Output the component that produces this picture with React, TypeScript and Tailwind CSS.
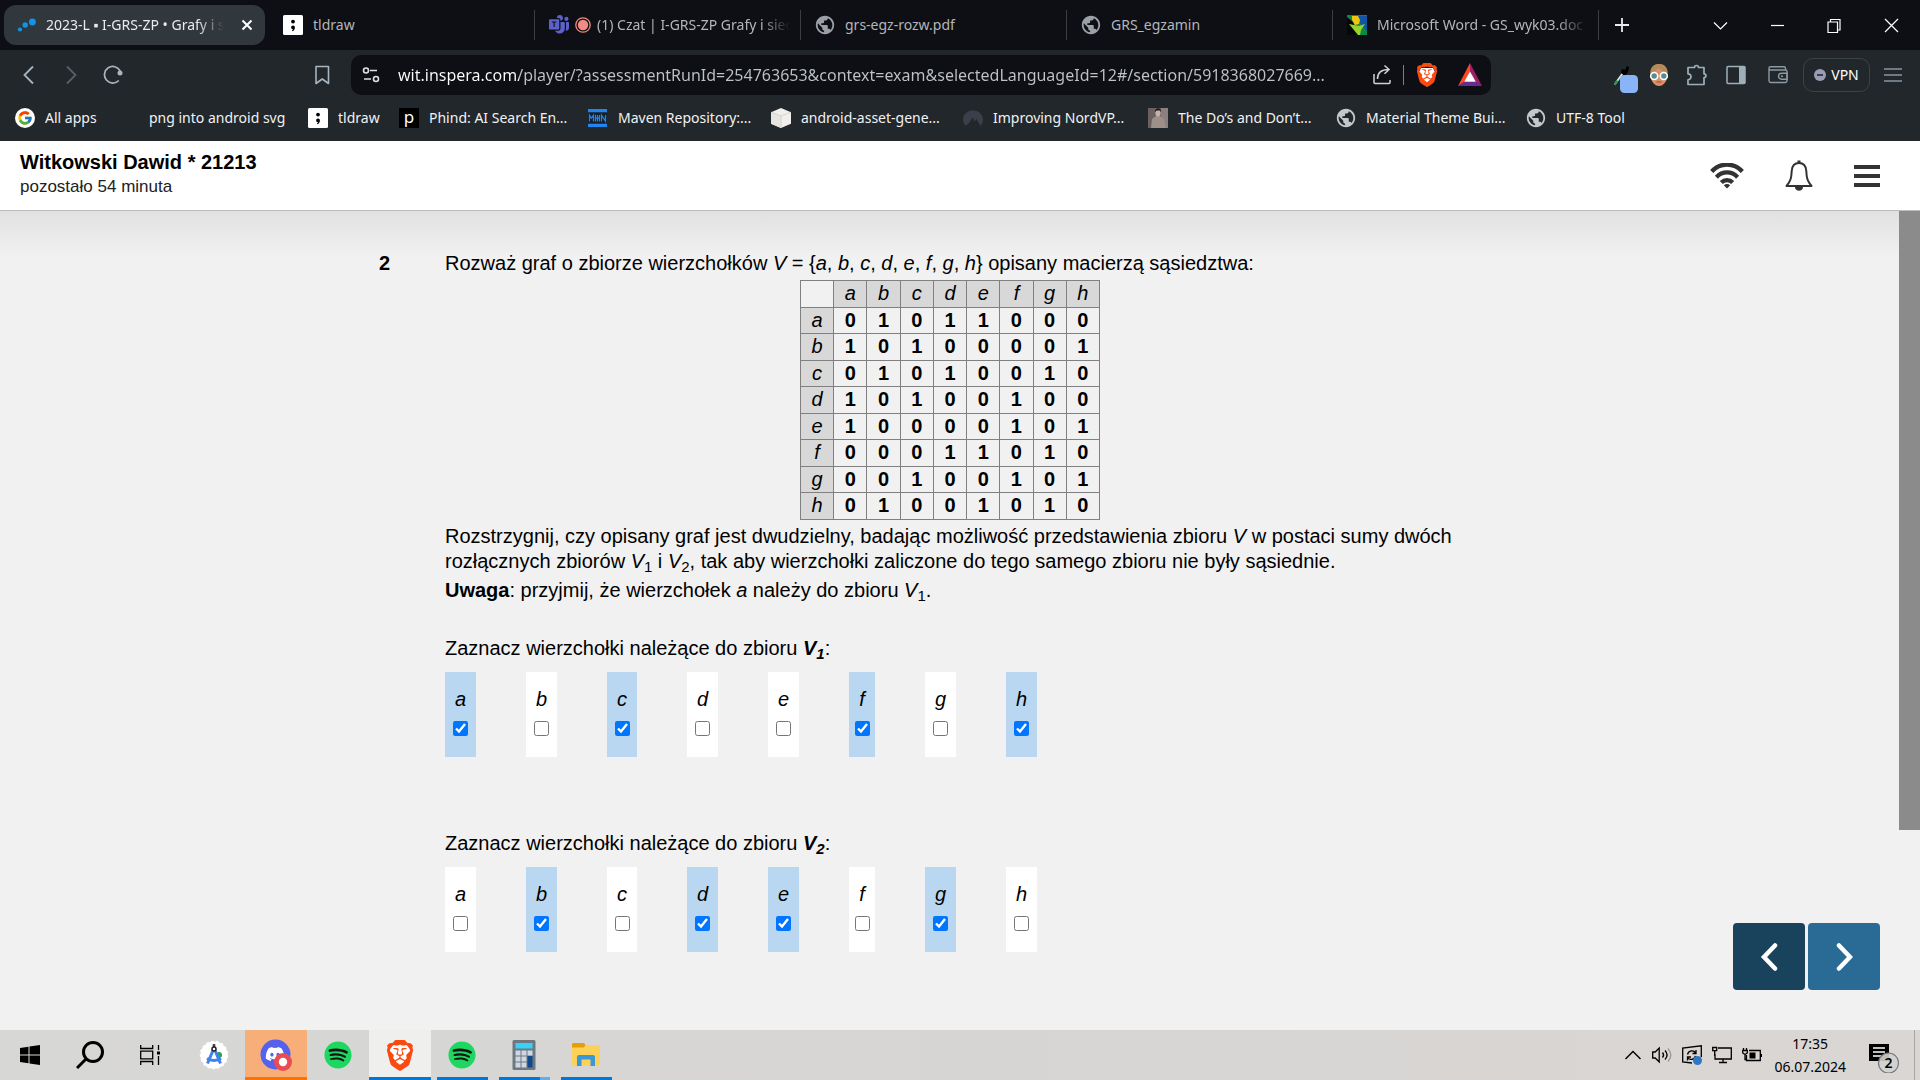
import React, { useState } from "react";
import { FcGoogle } from "react-icons/fc";
import { FaDiscord, FaSpotify } from "react-icons/fa";
import { SiBrave } from "react-icons/si";
import { MdPublic } from "react-icons/md";
import { BsMicrosoftTeams } from "react-icons/bs";

/* ---------- small drawings ---------- */

const Globe = ({ className = "" }: { className?: string }) => (
  <MdPublic className={`size-[22px] -mx-px shrink-0 ${className}`} />
);

const InsperaIcon = () => (
  <svg viewBox="0 0 20 20" className="size-5 shrink-0" fill="#0f94ea">
    <circle cx="3" cy="14.5" r="2.1" />
    <circle cx="8.2" cy="10" r="2.7" />
    <circle cx="15.4" cy="7" r="3.4" />
  </svg>
);

const TldrawIcon = () => (
  <svg viewBox="0 0 20 20" className="size-5 shrink-0">
    <rect width="20" height="20" rx="1.5" fill="#fff" />
    <circle cx="10" cy="6.6" r="1.9" fill="#000" />
    <path d="M8.1 12.2a1.9 1.9 0 0 1 3.8.2c0 1.8-.9 3.2-2.4 3.9l-.6-.7c.6-.4 1-.9 1-1.4a1.9 1.9 0 0 1-1.8-2z" fill="#000" />
  </svg>
);

const WordDocIcon = () => (
  <svg viewBox="0 0 20 20" className="size-5 shrink-0">
    <rect width="20" height="20" fill="#0c8a45" />
    <path d="M11 1h9v15l-7-8z" fill="#1255a4" />
    <path d="M0 2l6 5 6 13H0z" fill="#050805" />
    <path d="M5 1h6l2 4-1 4-4 1-3-5z" fill="#f1c40f" />
    <path d="M2 9l5 1 5 1 6-2-4 6-1 5h-2z" fill="#9ad32a" />
  </svg>
);

const RecordIcon = () => (
  <svg viewBox="0 0 16 16" className="size-4 shrink-0">
    <circle cx="8" cy="8" r="7.2" fill="none" stroke="#f28b82" strokeWidth="1.3" />
    <circle cx="8" cy="8" r="5.2" fill="#f28b82" />
  </svg>
);

const PhindIcon = () => (
  <span className="flex size-5 shrink-0 items-center justify-center bg-black pb-1 text-[17px] leading-none text-white">p</span>
);

const MavenIcon = () => (
  <svg viewBox="0 0 20 20" className="size-5 shrink-0">
    <rect y="1" width="19" height="3.500" fill="#1f86f0" />
    <rect y="15.500" width="19" height="3.500" fill="#1f86f0" />
    <rect y="4.500" width="19" height="11" fill="#14212c" />
    <path d="M1.500 13.500V7.200l2 3 2-3v6.300M7.500 7v6.500M9.500 7v6.500M11.500 7v6.500M7.500 10.200h4M13.500 13.500V7.200l4 6V7" fill="none" stroke="#1f86f0" strokeWidth="1.200" />
  </svg>
);

const CubeIcon = () => (
  <svg viewBox="0 0 20 20" className="size-5 shrink-0">
    <path d="M10 0l10 4.200v11.600L10 20 0 15.800V4.200z" fill="#f0efec" />
    <path d="M0 4.200l10 3.800v12L0 15.800z" fill="#e6e5e1" />
    <path d="M0 4.200L10 8l10-3.800M10 8v12" fill="none" stroke="#cfcdc8" strokeWidth="0.800" />
  </svg>
);

const NordIcon = () => (
  <svg viewBox="0 0 20 20" className="size-5 shrink-0">
    <path d="M2.500 18A10 9.500 0 1 1 17.500 18l-4-7-2 2.500L10 9.500 5.500 15.500z" fill="#3a3f4a" />
  </svg>
);

const PortraitIcon = () => (
  <svg viewBox="0 0 20 20" className="size-5 shrink-0">
    <rect width="20" height="20" fill="#6b5f60" />
    <rect x="13" width="7" height="20" fill="#8b7f80" />
    <path d="M3 20l1-9 4-3h4l4 3 2 9z" fill="#9c9088" />
    <ellipse cx="10" cy="5" rx="2.600" ry="3.400" fill="#c7b0a5" />
    <path d="M7 4c0-5 6-5 6.200 0l-1.500-1.500h-3z" fill="#1d1819" />
  </svg>
);

/* The lion is the cut-out part of the glyph, so a white patch sits behind it. */
const BraveLogo = ({ size }: { size: number }) => (
  <svg viewBox="2 0 20 24" height={size} width={Math.round((size * 20) / 24)}>
    <path d="M6 5h12l2 4-2 8-6 5-6-5-2-8z" fill="#fff" />
    <SiBrave size={24} color="#fb4a10" />
  </svg>
);

const BatIcon = () => (
  <svg viewBox="0 0 24 24" className="size-6 shrink-0">
    <path d="M12 0L0 23l6.500-4L12 9z" fill="#ff4724" />
    <path d="M12 0l12 23-6.500-4L12 9z" fill="#9e1f63" />
    <path d="M0 23h24l-6.500-4.500h-11z" fill="#662d91" />
    <path d="M12 8.500l5.800 10.200H6.200z" fill="#fff" />
  </svg>
);

const PickerIcon = () => (
  <svg viewBox="0 0 26 28" className="h-7 w-[26px] shrink-0">
    <path d="M2 19l8-11" stroke="#d8e6dc" strokeWidth="2" />
    <path d="M1.500 20l3-4.500" stroke="#1f9d4d" strokeWidth="2" />
    <path d="M9 4l3 1 2-4 2 1-1 5-3 4-4-3z" fill="#000" />
    <rect x="7" y="10" width="18" height="18" rx="4.500" fill="#8ab4f8" />
  </svg>
);

const FaceIcon = () => (
  <svg viewBox="0 0 20 22" className="h-[22px] w-5 shrink-0">
    <path d="M1.500 11C1 3.500 5 0 10 0s9 3.500 8.500 11c0 6-4 11-8.500 11S1.500 17 1.500 11z" fill="#d98f68" />
    <path d="M1.300 9C1.500 3 5 0 10 0s8.500 3 8.700 9C15 8 12 6 9 4 7 7 4 8 1.300 9z" fill="#b58a5a" />
    <circle cx="5.200" cy="12" r="3.500" fill="#5a8a92" stroke="#fff" strokeWidth="1.600" />
    <circle cx="14.800" cy="12" r="3.500" fill="#5a8a92" stroke="#fff" strokeWidth="1.600" />
    <path d="M7.500 18h5" stroke="#b0503c" strokeWidth="1.200" />
  </svg>
);

const PuzzleIcon = () => (
  <svg viewBox="0 0 22 22" className="size-[22px] shrink-0" fill="none" stroke="#9db0ba" strokeWidth="1.700" strokeLinejoin="round">
    <path d="M2 3.500h6.500a2 2 0 1 1 4 0H18v6.300a1.900 1.900 0 1 1 0 3.800V20.500H2v-4.700a3 3 0 0 0 0-6z" />
  </svg>
);

const PanelIcon = () => (
  <svg viewBox="0 0 20 20" className="size-5 shrink-0">
    <rect x="1" y="1.500" width="18" height="17" rx="1" fill="none" stroke="#9db0ba" strokeWidth="1.500" />
    <rect x="13" y="1.500" width="6" height="17" fill="#9db0ba" />
  </svg>
);

const WalletIcon = () => (
  <svg viewBox="0 0 20 20" className="size-5 shrink-0" fill="none" stroke="#8b9aa3" strokeWidth="1.400">
    <path d="M1 3.500v12.300c0 1 .7 1.700 1.700 1.700h14.600c1 0 1.700-.7 1.700-1.700V6.500c0-.9-.5-1.500-1.500-1.500H2.500A1.500 1.500 0 0 1 2.500 1.800H16c1 0 1.500.7 1.500 1.500V5" />
    <path d="M19 8.200h-5.500a3 3 0 0 0 0 6H19z" />
    <path d="M13 11.200h2" />
  </svg>
);

/* ---------- browser chrome ---------- */

type Tab = { title: string; icon: React.ReactNode; fade?: boolean };

const tabs: Tab[] = [
  { title: "tldraw", icon: <TldrawIcon /> },
  {
    title: "(1) Czat | I-GRS-ZP Grafy i sieci",
    icon: (
      <>
        <BsMicrosoftTeams className="size-5 shrink-0 text-[#5b62c9]" />
        <span className="-mr-1 -ml-1 flex"><RecordIcon /></span>
      </>
    ),
    fade: true,
  },
  { title: "grs-egz-rozw.pdf", icon: <Globe className="text-[#9aa0a6]" /> },
  { title: "GRS_egzamin", icon: <Globe className="text-[#9aa0a6]" /> },
  { title: "Microsoft Word - GS_wyk03.doc", icon: <WordDocIcon />, fade: true },
];

const fadeMask = "[mask-image:linear-gradient(90deg,#000_85%,transparent)]";

function TabStrip() {
  return (
    <div className="flex h-[50px] items-center bg-[#0d0f14] pl-1 text-sm text-[#b4b6b9]">
      <div className="mr-1 flex h-10 w-[261px] shrink-0 items-center gap-[9px] rounded-[12px] bg-[#31383d] pr-3 pl-[13px] text-[#e8eaed]">
        <InsperaIcon />
        <button className={`min-w-0 flex-1 overflow-hidden text-left whitespace-nowrap ${fadeMask}`}>2023-L ▪ I-GRS-ZP • Grafy i sieci</button>
        <button aria-label="Close tab" className="ml-2 text-white">
          <svg viewBox="0 0 12 12" className="size-3" stroke="currentColor" strokeWidth="2"><path d="M1.500 1.500l9 9M10.500 1.500l-9 9" /></svg>
        </button>
      </div>
      {tabs.map((tab) => (
        <button key={tab.title} className="flex h-[30px] w-[266px] shrink-0 items-center gap-[10px] border-r border-[#3a3d42] pl-[14px]">
          {tab.icon}
          <span className={`mr-[10px] min-w-0 flex-1 overflow-hidden text-left whitespace-nowrap ${tab.fade ? fadeMask : ""}`}>{tab.title}</span>
        </button>
      ))}
      <button aria-label="New tab" className="ml-4 text-[#e8eaed]">
        <svg viewBox="0 0 14 14" className="size-[14px]" stroke="currentColor" strokeWidth="1.800"><path d="M7 0v14M0 7h14" /></svg>
      </button>
      <div className="ml-auto flex text-white">
        {[
          ["Search tabs", "M1 4.500l6.500 6.500L14 4.500"],
          ["Minimize", "M1 7.500h13"],
          ["Restore", "M1 4h9.500v10.500H1zM3.500 4V1.500H13v10.500h-2.500"],
          ["Close", "M1 1l13 13M14 1L1 14"],
        ].map(([label, d]) => (
          <button key={label} aria-label={label} className="flex h-[50px] w-[57px] items-center justify-center">
            <svg viewBox="0 0 15 15" className="size-[15px]" fill="none" stroke="currentColor" strokeWidth="1.200"><path d={d} /></svg>
          </button>
        ))}
      </div>
    </div>
  );
}

function Toolbar() {
  return (
    <div className="flex h-[50px] items-center bg-[#22272b] text-[#a6b5bf]">
      <button aria-label="Back" className="ml-[19px]">
        <svg viewBox="0 0 20 20" className="size-5" fill="none" stroke="currentColor" strokeWidth="1.800"><path d="M14 1.500L5.500 10l8.500 8.500" /></svg>
      </button>
      <button aria-label="Forward" className="ml-[22px] text-[#596066]">
        <svg viewBox="0 0 20 20" className="size-5" fill="none" stroke="currentColor" strokeWidth="1.800"><path d="M6 1.500l8.500 8.500L6 18.500" /></svg>
      </button>
      <button aria-label="Reload" className="ml-[22px]">
        <svg viewBox="0 0 20 20" className="size-5" fill="none" stroke="currentColor" strokeWidth="1.700">
          <path d="M15.800 15.500A8.300 8.300 0 1 1 17.200 6" /><circle cx="17" cy="8" r="2.500" fill="currentColor" stroke="none" />
        </svg>
      </button>
      <button aria-label="Bookmark" className="ml-[189px]">
        <svg viewBox="0 0 20 20" className="size-5" fill="none" stroke="currentColor" strokeWidth="1.600" strokeLinejoin="round"><path d="M4 1.500h12.500v17l-6.200-4.500L4 18.500z" /></svg>
      </button>
      <div className="ml-[19px] flex h-10 min-w-0 flex-1 items-center rounded-[10px] bg-[#0d0f14] pr-[9px] pl-[11px]">
        <svg viewBox="0 0 18 18" className="mr-[18px] size-[18px] shrink-0" fill="none" stroke="#dfe1e3" strokeWidth="1.600">
          <circle cx="4" cy="4.500" r="2.500" /><path d="M8 4.500h7M2 13h7" /><circle cx="14" cy="13" r="2.500" />
        </svg>
        <input
          aria-label="Address"
          defaultValue="wit.inspera.com/player/?assessmentRunId=254763653&context=exam&selectedLanguageId=12#/section/5918368027669..."
          className="min-w-0 flex-1 bg-[linear-gradient(90deg,#ffffff_121px,#bfc3c7_121px)] bg-clip-text text-base text-transparent outline-none"
        />
        <button aria-label="Share" className="ml-2 text-[#cfd2d5]">
          <svg viewBox="0 0 22 22" className="size-[22px]" fill="none" stroke="currentColor" strokeWidth="1.500">
            <path d="M3 10v8.500c0 .6.500 1 1 1h14c.600 0 1-.500 1-1V16M6.500 15c0-6 4-9.500 11-9.500M13.500 1.500l4.500 4-4.500 4.200" />
          </svg>
        </button>
        <span className="mr-[9px] ml-[10px] h-5 w-px bg-[#7b7f83]" />
        <button aria-label="Brave Shields" className="mr-[21px] ml-[4px]"><BraveLogo size={24} /></button>
        <button aria-label="Brave Rewards"><BatIcon /></button>
      </div>
      <button aria-label="Color picker" className="ml-[122px] pt-2"><PickerIcon /></button>
      <button aria-label="Profile extension" className="ml-[10px]"><FaceIcon /></button>
      <button aria-label="Extensions" className="ml-[17px]"><PuzzleIcon /></button>
      <button aria-label="Side panel" className="ml-[18px]"><PanelIcon /></button>
      <button aria-label="Wallet" className="ml-[22px]"><WalletIcon /></button>
      <button className="ml-[15px] flex h-[34px] w-[67px] items-center justify-center gap-[5px] rounded-[10px] border border-[#3b4347] text-sm text-white">
        <svg viewBox="0 0 12 12" className="size-3"><circle cx="6" cy="6" r="6" fill="#9a9cb5" /><path d="M3 6h6" stroke="#22272b" strokeWidth="1.600" /></svg>
        VPN
      </button>
      <button aria-label="Menu" className="mr-[18px] ml-[14px]">
        <svg viewBox="0 0 18 14" className="h-[14px] w-[18px]" stroke="#8797a0" strokeWidth="1.300"><path d="M0 1h18M0 7h18M0 13h18" /></svg>
      </button>
    </div>
  );
}

function Bookmarks() {
  const items: { label: string; icon: React.ReactNode; w: string }[] = [
    { label: "All apps", icon: <span className="flex size-5 shrink-0 items-center justify-center rounded-full bg-white"><FcGoogle className="size-4" /></span>, w: "w-[104px]" },
    { label: "png into android svg", icon: <span className="size-5 shrink-0" />, w: "w-[189px]" },
    { label: "tldraw", icon: <TldrawIcon />, w: "w-[91px]" },
    { label: "Phind: AI Search En...", icon: <PhindIcon />, w: "w-[189px]" },
    { label: "Maven Repository:...", icon: <MavenIcon />, w: "w-[183px]" },
    { label: "android-asset-gene...", icon: <CubeIcon />, w: "w-[192px]" },
    { label: "Improving NordVP...", icon: <NordIcon />, w: "w-[185px]" },
    { label: "The Do’s and Don’t...", icon: <PortraitIcon />, w: "w-[188px]" },
    { label: "Material Theme Bui...", icon: <Globe className="text-[#c4c7cb]" />, w: "w-[190px]" },
    { label: "UTF-8 Tool", icon: <Globe className="text-[#c4c7cb]" />, w: "w-[110px]" },
  ];
  return (
    <nav className="flex h-[41px] items-start bg-[#22272b] pt-[6px] pl-[15px] text-sm text-[#f1f2f3]">
      {items.map((b) => (
        <a key={b.label} href="#" className={`flex h-6 shrink-0 items-center gap-[10px] whitespace-nowrap ${b.w}`}>
          {b.icon}
          {b.label}
        </a>
      ))}
    </nav>
  );
}

/* ---------- exam page ---------- */

function ExamHeader() {
  return (
    <header className="flex h-[70px] items-center justify-between border-b border-[#bdbdbd] bg-white pr-10 pl-5 text-black">
      <div className="pb-0.5">
        <h1 className="text-xl leading-6 font-bold">Witkowski Dawid * 21213</h1>
        <p className="text-[17px] leading-[26px] text-[#222]">pozostało 54 minuta</p>
      </div>
      <div className="flex items-center text-[#333]">
        <svg viewBox="0 0 34 26" className="h-[26px] w-[34px]" fill="none" stroke="currentColor" strokeWidth="4.200">
          <path d="M1.700 8.500C10-.8 24-.8 32.300 8.500" /><path d="M6.400 14.200c6-6.400 15.200-6.400 21.200 0" /><path d="M11.300 19.500c3.200-3.300 8.200-3.300 11.400 0" />
          <path d="M13.800 22.300c1.900-1.600 4.500-1.600 6.400 0L17 25.500z" fill="currentColor" stroke="none" />
        </svg>
        <button aria-label="Notifications" className="ml-[41px]">
          <svg viewBox="0 0 28 32" className="h-8 w-7" fill="none" stroke="currentColor" strokeWidth="2" strokeLinejoin="round">
            <path d="M14 3c-5 0-7 3.500-7.300 8-.3 7-1 10-5.200 15h25c-4.200-5-4.900-8-5.200-15C21 6.500 19 3 14 3z" /><path d="M14 .5V3" strokeWidth="3" />
            <path d="M10 27h8c0 5-8 5-8 0z" fill="currentColor" stroke="none" />
          </svg>
        </button>
        <button aria-label="Menu" className="ml-[41px]">
          <svg viewBox="0 0 26 24" className="h-6 w-[26px]" fill="currentColor"><rect y="1" width="26" height="4" /><rect y="10" width="26" height="4" /><rect y="19" width="26" height="4" /></svg>
        </button>
      </div>
    </header>
  );
}

const names = ["a", "b", "c", "d", "e", "f", "g", "h"];
const matrix = ["01011000", "10100001", "01010010", "10100100", "10000101", "00011010", "00100101", "01001010"];

function AdjacencyTable() {
  return (
    <table className="mx-auto w-[300px] table-fixed border-collapse text-center leading-[22px] [&_td]:border [&_td]:border-[#808080] [&_td]:p-0 [&_td]:pb-0.5 [&_th]:border [&_th]:border-[#808080] [&_th]:p-0 [&_th]:pb-0.5">
      <thead>
        <tr className="h-[27px]">
          <td />
          {names.map((n) => (
            <th key={n} className="bg-[#d8d8d8] font-normal italic">{n}</th>
          ))}
        </tr>
      </thead>
      <tbody className="[&>tr:nth-child(even)]:h-[27px] [&>tr:nth-child(odd)]:h-[26px]">
        {names.map((n, r) => (
          <tr key={n}>
            <th className="bg-[#d8d8d8] font-normal italic">{n}</th>
            {matrix[r].split("").map((v, c) => (
              <td key={c} className="font-bold">{v}</td>
            ))}
          </tr>
        ))}
      </tbody>
    </table>
  );
}

const Sub = ({ children }: { children: React.ReactNode }) => <sub className="text-[15px]">{children}</sub>;

function VertexChoice({ set, initial }: { set: string; initial: string }) {
  const [chosen, setChosen] = useState(initial);
  return (
    <fieldset>
      <legend className="leading-[25px]">
        Zaznacz wierzchołki należące do zbioru{" "}
        <b className="italic">V<Sub>{set}</Sub></b>:
      </legend>
      <div className="mt-[11px] flex gap-[50px]">
        {names.map((n) => {
          const on = chosen.includes(n);
          const width = n === "f" ? "w-[26px]" : n === "c" ? "w-[30px]" : "w-[31px]";
          return (
            <label key={n} className={`flex h-[85px] flex-col items-center pt-[15px] ${width} ${on ? "bg-[#bad7f1]" : "bg-white"}`}>
              <i className="leading-[25px]">{n}</i>
              <input
                type="checkbox"
                checked={on}
                onChange={() => setChosen(on ? chosen.replace(n, "") : chosen + n)}
                className="mt-[9px] size-[15px]"
              />
            </label>
          );
        })}
      </div>
    </fieldset>
  );
}

function Question() {
  return (
    <main className="relative flex flex-1 bg-[#f1f1f1] bg-[linear-gradient(180deg,#e1e1e1_0px,#f1f1f1_46px)] text-xl leading-[25px] text-black">
      <div className="flex min-w-0 flex-1 pt-10 pl-[379px]">
        <b className="w-[66px] shrink-0">2</b>
        <section className="w-[1010px]">
          <p className="pb-1">
            Rozważ graf o zbiorze wierzchołków <i>V</i> = {"{"}
            {names.map((n, i) => (
              <React.Fragment key={n}><i>{n}</i>{i < 7 ? ", " : ""}</React.Fragment>
            ))}
            {"}"} opisany macierzą sąsiedztwa:
          </p>
          <AdjacencyTable />
          <p className="mt-1">
            Rozstrzygnij, czy opisany graf jest dwudzielny, badając możliwość przedstawienia zbioru <i>V</i> w postaci sumy dwóch rozłącznych zbiorów <i>V</i><Sub>1</Sub> i <i>V</i><Sub>2</Sub>, tak aby wierzchołki zaliczone do tego samego zbioru nie były sąsiednie.
          </p>
          <p className="mt-1">
            <b>Uwaga</b>: przyjmij, że wierzchołek <i>a</i> należy do zbioru <i>V</i><Sub>1</Sub>.
          </p>
          <div className="mt-[33px] flex flex-col gap-[74px]">
            <VertexChoice set="1" initial="acfh" />
            <VertexChoice set="2" initial="bdeg" />
          </div>
        </section>
      </div>
      <div className="w-[21px] shrink-0"><div className="h-[619px] bg-[#8b8b8b]" /></div>
      <div className="absolute right-10 bottom-10 flex gap-[3px] text-white">
        <button aria-label="Poprzednie" className="flex h-[67px] w-[72px] items-center justify-center rounded bg-[#19435d]">
          <svg viewBox="0 0 18 30" className="h-[30px] w-[18px]" fill="none" stroke="currentColor" strokeWidth="4.500" strokeLinecap="round"><path d="M15 3.500L4 15l11 11.500" /></svg>
        </button>
        <button aria-label="Następne" className="flex h-[67px] w-[72px] items-center justify-center rounded bg-[#2a6b96]">
          <svg viewBox="0 0 18 30" className="h-[30px] w-[18px]" fill="none" stroke="currentColor" strokeWidth="4.500" strokeLinecap="round"><path d="M4 3.500L15 15 4 26.500" /></svg>
        </button>
      </div>
    </main>
  );
}

/* ---------- taskbar ---------- */

const AndroidStudioIcon = () => (
  <svg viewBox="0 0 30 30" className="size-[30px]">
    <circle cx="15" cy="15" r="13.500" fill="#fff" />
    <circle cx="15" cy="15" r="13.500" fill="none" stroke="#fff" strokeWidth="1.500" strokeDasharray="3 2" />
    <circle cx="20" cy="15" r="3" fill="#2f9e57" />
    <path d="M15 8L8.500 23.500M15 8l6.500 15.500M8 18.500c4 2.500 10 2.500 14 0" fill="none" stroke="#3f82f2" strokeWidth="3" />
    <rect x="13.700" y="4" width="2.600" height="3" fill="#444" />
    <circle cx="15" cy="9" r="2" fill="#fff" stroke="#222" strokeWidth="1.500" />
  </svg>
);

const DiscordIcon = () => (
  <svg viewBox="0 0 32 32" className="size-8">
    <circle cx="15.500" cy="15.500" r="15" fill="#5562ee" />
    <FaDiscord x="5" y="5" size={20} color="#fff" />
    <circle cx="23" cy="23" r="9" fill="#ea4c54" />
    <circle cx="23" cy="23" r="4.200" fill="#fff" />
  </svg>
);

const SpotifyIcon = () => (
  <svg viewBox="0 0 28 28" className="size-7">
    <circle cx="14" cy="14" r="12" fill="#191414" />
    <FaSpotify size={28} color="#1ed760" />
  </svg>
);

const CalculatorIcon = () => (
  <svg viewBox="0 0 24 30" className="h-[30px] w-6">
    <rect x=".5" width="23" height="30" rx="1.500" fill="#6d7880" />
    <rect x="3.500" y="3" width="17" height="5.500" fill="#3cd0f7" />
    {[0, 1, 2].map((r) => [0, 1, 2].map((c) => (c === 2 && r > 0 ? null : <rect key={`${r}${c}`} x={3.5 + c * 6} y={10.5 + r * 6} width="5" height="5" fill="#cfd7e2" />)))}
    <rect x="15.500" y="16" width="5" height="11.500" fill="#114a8b" />
  </svg>
);

const ExplorerIcon = () => (
  <svg viewBox="0 0 28 24" className="h-6 w-7">
    <path d="M0 1.500C0 .7.600 0 1.500 0H12l1.500 2L12 5H0z" fill="#e2a006" />
    <path d="M0 4.500h12L14.500 2H26.500c.8 0 1.500.7 1.500 1.500V21c0 .8-.700 1.500-1.500 1.500h-25C.700 22.500 0 21.800 0 21z" fill="#fdd057" />
    <path d="M5 23V14a2 2 0 0 1 2-2h14a2 2 0 0 1 2 2v9h-4.500v-6.500h-9V23z" fill="#3a97d8" />
  </svg>
);

function TaskButton({ label, children, cell = "", line = "" }: { label: string; children: React.ReactNode; cell?: string; line?: string }) {
  return (
    <button aria-label={label} className={`flex h-full w-[62px] shrink-0 flex-col items-center ${cell}`}>
      <span className="flex flex-1 items-center pt-[3px]">{children}</span>
      <span className={`h-[3px] ${line}`} />
    </button>
  );
}

function Taskbar() {
  return (
    <footer className="flex h-[50px] items-center justify-between bg-[linear-gradient(90deg,#d7d7d5,#d6d5d3_50%,#dad6d4)] text-black">
      <div className="flex h-full items-center">
        <button aria-label="Start" className="flex w-[60px] justify-center">
          <svg viewBox="0 0 20 20" className="size-5"><path d="M0 3l8.500-1.300v7.800H0zM9.500 1.500L20 0v9.500H9.500zM0 10.500h8.500v7.800L0 17zM9.500 10.500H20V20L9.500 18.500z" /></svg>
        </button>
        <button aria-label="Szukaj" className="flex w-[60px] justify-center">
          <svg viewBox="0 0 28 28" className="size-7" fill="none" stroke="currentColor" strokeWidth="3"><circle cx="17" cy="11" r="9.500" /><path d="M10 18L1 27" /></svg>
        </button>
        <button aria-label="Widok zadań" className="mr-[3px] flex w-[60px] justify-center">
          <svg viewBox="0 0 20 20" className="size-5" fill="none" stroke="currentColor" strokeWidth="1.300"><path d="M.7 0v3.500h12V0M.7 20v-3.500h12V20M.7 6.200h12v7.600H.7zM18.500 0v5M18.500 11v9" /><path d="M17 6.500h3v3h-3z" fill="currentColor" stroke="none" /></svg>
        </button>
        <TaskButton label="Android Studio"><AndroidStudioIcon /></TaskButton>
        <TaskButton label="Discord" cell="bg-[#f8ae78]" line="w-full bg-[#ff7200]"><DiscordIcon /></TaskButton>
        <TaskButton label="Spotify"><SpotifyIcon /></TaskButton>
        <TaskButton label="Brave" cell="bg-[#efefee]" line="w-full bg-[#0078d7]"><BraveLogo size={31} /></TaskButton>
        <TaskButton label="Spotify" line="w-[51px] bg-[#0078d7]"><SpotifyIcon /></TaskButton>
        <TaskButton label="Kalkulator" line="w-[51px] bg-[linear-gradient(90deg,#0078d7_41px,#66aee7_41px)]"><CalculatorIcon /></TaskButton>
        <TaskButton label="Eksplorator plików" line="w-[51px] bg-[#0078d7]"><ExplorerIcon /></TaskButton>
      </div>
      <div className="flex h-full items-center">
        <div className="flex items-center gap-[10px]">
          <svg viewBox="0 0 18 20" className="h-5 w-[18px]" fill="none" stroke="currentColor" strokeWidth="1.400"><path d="M1.500 14L9 6.500l7.500 7.500" /></svg>
          <svg viewBox="0 0 20 20" className="size-5" fill="none" stroke="currentColor" strokeWidth="1.300"><path d="M.7 7v6h2.500l4 4V3l-4 4z" /><path d="M10.500 7.500c1.300 1.500 1.300 3.500 0 5M13 5.500c2.500 2.700 2.500 6.300 0 9" /><path d="M16 3.500c3.500 4 3.500 9 0 13" stroke="#999" /></svg>
          <svg viewBox="0 0 20 20" className="size-5" fill="none" stroke="currentColor" strokeWidth="1.300"><path d="M10 18L.7 17V3L19.300.8V12" /><path d="M5.500 9.500C6.500 5 12 5 13.500 8M14 5v3.500h-3.500M13.500 11c-1 4-6 4.500-8 1.500M5.500 15.500V12H9" /><circle cx="15.500" cy="15.500" r="4.500" fill="#2b78c5" stroke="none" /></svg>
          <svg viewBox="0 0 20 20" className="size-5" fill="none" stroke="currentColor" strokeWidth="1.300"><path d="M6 3h13.300v11H3V9M11 14v3.500M7 17.500h8M.7 2.500h4v3.200h-4zM2.700 6v5" /></svg>
          <svg viewBox="0 0 20 20" className="size-5" fill="none" stroke="currentColor" strokeWidth="1.300"><path d="M7 5.500h11.300v10H4.500V10M19.500 9v3M1.500 3v2.500M4.500 3v2.500M.7 5.500h4.600V8L3 9.500.700 8zM3 9.500v5h2" /><path d="M7.500 7.500h6v6h-6z" fill="currentColor" stroke="none" /></svg>
        </div>
        <div className="ml-3 text-center text-sm leading-[23px]">
          <p>17:35</p>
          <p>06.07.2024</p>
        </div>
        <button aria-label="Powiadomienia" className="ml-[22px] pt-1">
          <svg viewBox="0 0 32 32" className="size-8">
            <path d="M1 3h20v17H1z" /><path d="M5 7h12M5 11h12M5 15h8" stroke="#fff" strokeWidth="1.300" />
            <circle cx="20.500" cy="22" r="10" fill="#d3d1cf" fillOpacity=".9" stroke="#777" strokeWidth="1.200" />
            <text x="20.500" y="27" textAnchor="middle" fontSize="14" fontWeight="600">2</text>
          </svg>
        </button>
        <span className="mr-[5px] ml-[14px] h-full w-px bg-[#a9a6a4]" />
      </div>
    </footer>
  );
}

export default function App() {
  return (
    <div className="flex min-h-screen flex-col font-['Noto_Sans','Open_Sans',sans-serif]">
      <div>
        <TabStrip />
        <Toolbar />
        <Bookmarks />
      </div>
      <div className="flex flex-1 flex-col font-['Liberation_Sans',Arial,sans-serif]">
        <ExamHeader />
        <Question />
      </div>
      <Taskbar />
    </div>
  );
}
